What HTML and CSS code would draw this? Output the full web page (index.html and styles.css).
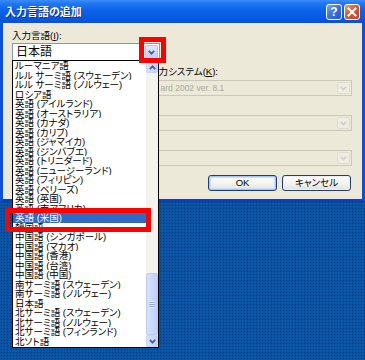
FILE: index.html
```html
<!DOCTYPE html>
<html lang="ja">
<head>
<meta charset="utf-8">
<title>入力言語の追加</title>
<link rel="stylesheet" href="styles.css">
</head>
<body>
<div class="screen">
  <div class="dialog">
    <div class="titlebar">
      <span class="title">入力言語の追加</span>
      <div class="caption-buttons">
        <span class="cbtn help">?</span>
        <span class="cbtn close"><svg width="14" height="14" viewBox="0 0 14 14"><path d="M3.5 3.5 L10.5 10.5 M10.5 3.5 L3.5 10.5" stroke="#fff" stroke-width="2" stroke-linecap="square"/></svg></span>
      </div>
    </div>
    <div class="body">
      <div class="label">入力言語(<u>I</u>):</div>
      <div class="combo combo-active">
        <span class="combo-text">日本語</span>
        <span class="drop"><svg width="7" height="5" viewBox="0 0 7 5"><polyline points="0.8,0.8 3.5,3.6 6.2,0.8" fill="none" stroke="#4d6185" stroke-width="1.8"/></svg></span>
      </div>
      <div class="label label-kb"><span class="covered">キーボード レイアウト/入</span>力システム(<u>K</u>):</div>
      <div class="combo combo-disabled">
        <span class="combo-text text-kb"><span class="covered">Microsoft IME Stand</span>ard 2002 ver. 8.1</span>
        <span class="drop"><svg width="7" height="5" viewBox="0 0 7 5"><polyline points="0.8,0.8 3.5,3.6 6.2,0.8" fill="none" stroke="#cfcdc2" stroke-width="1.6"/></svg></span>
      </div>
      <div class="combo combo-disabled combo-gap">
        <span class="combo-text"></span>
        <span class="drop"><svg width="7" height="5" viewBox="0 0 7 5"><polyline points="0.8,0.8 3.5,3.6 6.2,0.8" fill="none" stroke="#cfcdc2" stroke-width="1.6"/></svg></span>
      </div>
      <div class="combo combo-disabled combo-gap">
        <span class="combo-text"></span>
        <span class="drop"><svg width="7" height="5" viewBox="0 0 7 5"><polyline points="0.8,0.8 3.5,3.6 6.2,0.8" fill="none" stroke="#cfcdc2" stroke-width="1.6"/></svg></span>
      </div>
      <div class="buttons">
        <button class="btn btn-default">OK</button>
        <button class="btn">キャンセル</button>
      </div>
    </div>
  </div>

  <div class="listbox">
    <div class="items">
      <div class="item">ルーマニア語</div>
      <div class="item">ルル サーミ語 (スウェーデン)</div>
      <div class="item">ルル サーミ語 (ノルウェー)</div>
      <div class="item">ロシア語</div>
      <div class="item">英語 (アイルランド)</div>
      <div class="item">英語 (オーストラリア)</div>
      <div class="item">英語 (カナダ)</div>
      <div class="item">英語 (カリブ)</div>
      <div class="item">英語 (ジャマイカ)</div>
      <div class="item">英語 (ジンバブエ)</div>
      <div class="item">英語 (トリニダード)</div>
      <div class="item">英語 (ニュージーランド)</div>
      <div class="item">英語 (フィリピン)</div>
      <div class="item">英語 (ベリーズ)</div>
      <div class="item">英語 (英国)</div>
      <div class="item">英語 (南アフリカ)</div>
      <div class="item selected">英語 (米国)</div>
      <div class="item">韓国語</div>
      <div class="item">中国語 (シンガポール)</div>
      <div class="item">中国語 (マカオ)</div>
      <div class="item">中国語 (香港)</div>
      <div class="item">中国語 (台湾)</div>
      <div class="item">中国語 (中国)</div>
      <div class="item">南サーミ語 (スウェーデン)</div>
      <div class="item">南サーミ語 (ノルウェー)</div>
      <div class="item">日本語</div>
      <div class="item">北サーミ語 (スウェーデン)</div>
      <div class="item">北サーミ語 (ノルウェー)</div>
      <div class="item">北サーミ語 (フィンランド)</div>
      <div class="item">北ソト語</div>
    </div>
    <div class="scrollbar">
      <div class="sb-btn"><svg width="7" height="5" viewBox="0 0 7 5"><polyline points="0.8,4.2 3.5,1.4 6.2,4.2" fill="none" stroke="#4d6185" stroke-width="1.8"/></svg></div>
      <div class="sb-track"></div>
      <div class="sb-thumb"><span class="grip"></span></div>
      <div class="sb-btn"><svg width="7" height="5" viewBox="0 0 7 5"><polyline points="0.8,0.8 3.5,3.6 6.2,0.8" fill="none" stroke="#4d6185" stroke-width="1.8"/></svg></div>
    </div>
  </div>

  <div class="mark mark-drop"></div>
  <div class="mark mark-item"></div>
</div>
</body>
</html>
```
FILE: styles.css
```css
* {
  box-sizing: border-box;
  margin: 0;
  padding: 0;
}

html, body {
  width: 365px;
  height: 360px;
  overflow: hidden;
}

body {
  background-color: #0b56a6;
  background-image: radial-gradient(circle, #033c80 0.75px, transparent 1.05px);
  background-size: 3px 3px;
  font-family: "Liberation Sans", "Noto Sans CJK JP", sans-serif;
  font-feature-settings: "palt";
  color: #000;
}

.screen {
  position: relative;
  width: 365px;
  height: 360px;
}

/* dialog window */
.dialog {
  width: 365px;
  height: 202px;
  display: flex;
  flex-direction: column;
}

.titlebar {
  height: 23px;
  flex: none;
  display: flex;
  align-items: center;
  justify-content: space-between;
  padding: 0 5px 0 5px;
  background: linear-gradient(#3b8df8 0%, #2277f3 15%, #0c63e8 45%, #0559e2 80%, #0a50d4 100%);
}

.title {
  color: #fff;
  font-weight: bold;
  font-size: 11px;
  line-height: 12px;
  text-shadow: 1px 1px 0 #0a2a90;
}

.caption-buttons {
  display: flex;
  gap: 2px;
}

.cbtn {
  width: 16px;
  height: 16px;
  border: 1px solid #fff;
  border-radius: 3px;
  display: flex;
  align-items: center;
  justify-content: center;
  color: #fff;
  font-weight: bold;
  font-size: 12px;
  line-height: 12px;
}

.help {
  background: linear-gradient(135deg, #7aa8f8 0%, #3c72ea 45%, #1f55d8 100%);
}

.close {
  background: linear-gradient(135deg, #f29a7c 0%, #e0582f 45%, #c8401a 100%);
}

.body {
  flex: 1;
  background: #ece9d8;
  border: 3px solid #0c4fd8;
  border-top: 0;
  border-bottom-color: #0a3fc0;
  padding: 7px 10px 0 9px;
  display: flex;
  flex-direction: column;
}

.label {
  font-size: 9.5px;
  line-height: 11px;
  height: 11px;
  white-space: nowrap;
  overflow: hidden;
}

.label u {
  text-decoration: underline;
}

/* part of a text that lies under the dropped list */
.covered {
  visibility: hidden;
}

.label-kb {
  margin-top: 5px;
  padding-left: 46px;
}

.combo {
  display: flex;
  align-items: center;
  border: 1px solid #7f9db9;
  background: #fff;
  padding: 1px;
}

.combo-active {
  width: 148px;
  height: 18px;
  margin-top: 2px;
}

.combo-text {
  flex: 1;
  white-space: nowrap;
  overflow: hidden;
  padding-left: 2px;
}

.combo-active .combo-text {
  font-size: 12px;
  line-height: 14px;
}

.drop {
  width: 13px;
  height: 14px;
  flex: none;
  display: flex;
  align-items: center;
  justify-content: center;
  border-radius: 2px;
  background: linear-gradient(#dfe8fd, #bccffa);
  border: 1px solid #b3c6f3;
}

.combo-disabled {
  height: 16px;
  margin-top: 3px;
  border-color: #cbc8bb;
  background: #ece9d8;
}

.combo-disabled .drop {
  height: 12px;
  background: #efede3;
  border-color: #dedbd0;
}

.combo-gap {
  margin-top: 19px;
}

.text-kb {
  font-size: 8.5px;
  line-height: 12px;
  color: #aca899;
  padding-left: 70px;
}

.buttons {
  margin-top: 9px;
  display: flex;
  justify-content: flex-end;
  gap: 5px;
  padding-right: 1px;
}

.btn {
  width: 69px;
  height: 16px;
  border: 1px solid #1c3f78;
  border-radius: 3px;
  background: linear-gradient(#fdfdfb 0%, #f3f2ec 60%, #e3e0d3 100%);
  font-family: "Liberation Sans", "Noto Sans CJK JP", sans-serif;
  font-feature-settings: "palt";
  font-size: 9.5px;
  line-height: 12px;
  color: #000;
  box-shadow: inset 0 0 0 1px #e9eef8;
}

.btn-default {
  box-shadow: inset 0 0 0 1px #a9c4ee, inset 0 0 0 2px #cddffa;
}

/* dropped list */
.listbox {
  position: absolute;
  left: 12px;
  top: 60px;
  width: 147px;
  height: 288px;
  border: 1px solid #000;
  background: #fff;
  display: flex;
}

.items {
  flex: 1;
  overflow: hidden;
}

.item {
  height: 9.53px;
  font-size: 9.5px;
  line-height: 9.53px;
  padding-left: 2px;
  white-space: nowrap;
  overflow: hidden;
}

.item.selected {
  background: #316ac5;
  color: #fff;
}

.scrollbar {
  width: 12px;
  flex: none;
  display: flex;
  flex-direction: column;
  background: #f4f3ee;
}

.sb-btn {
  height: 12px;
  flex: none;
  display: flex;
  align-items: center;
  justify-content: center;
  border-radius: 2px;
  background: linear-gradient(90deg, #d9e4fd, #bcd0fa);
  border: 1px solid #c6d5f8;
}

.sb-track {
  flex: 1;
}

.sb-thumb {
  height: 62px;
  flex: none;
  border-radius: 2px;
  background: linear-gradient(90deg, #d6e2fd, #bed1fa);
  border: 1px solid #b9cbf4;
  display: flex;
  align-items: center;
  justify-content: center;
}

.grip {
  width: 6px;
  height: 7px;
  background: repeating-linear-gradient(#eef3fe 0 1px, #8faae6 1px 2px);
}

/* red highlight marks */
.mark {
  position: absolute;
  border: 5px solid #ff0000;
}

.mark-drop {
  left: 139px;
  top: 37px;
  width: 27px;
  height: 26px;
}

.mark-item {
  left: 5px;
  top: 208px;
  width: 146px;
  height: 24px;
}
```
